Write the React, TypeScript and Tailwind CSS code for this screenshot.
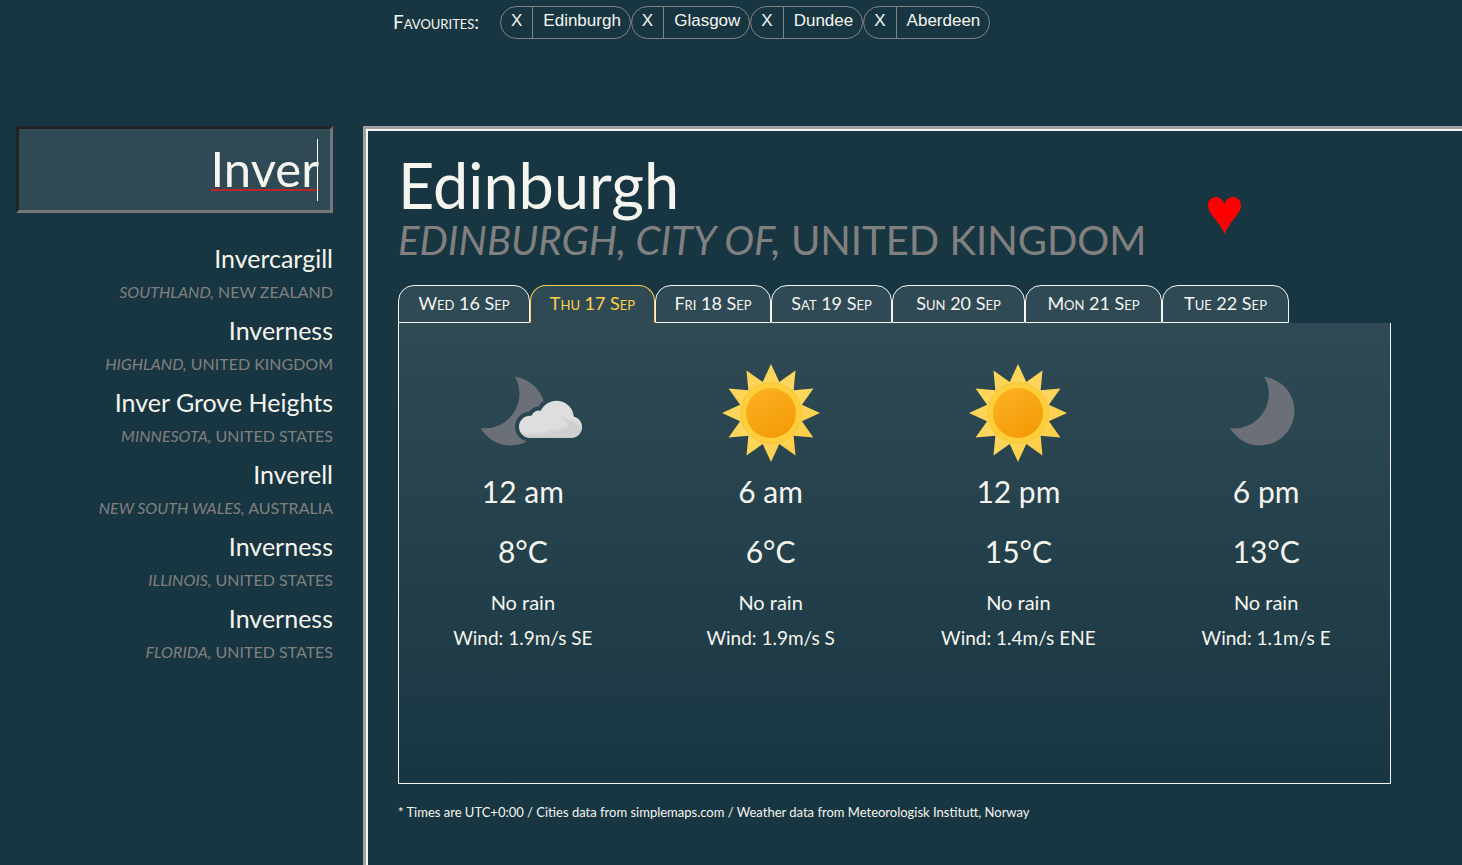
import { useState } from "react";

const favourites = ["Edinburgh", "Glasgow", "Dundee", "Aberdeen"];

const results = [
  { city: "Invercargill", region: "Southland", country: "New Zealand" },
  { city: "Inverness", region: "Highland", country: "United Kingdom" },
  { city: "Inver Grove Heights", region: "Minnesota", country: "United States" },
  { city: "Inverell", region: "New South Wales", country: "Australia" },
  { city: "Inverness", region: "Illinois", country: "United States" },
  { city: "Inverness", region: "Florida", country: "United States" },
];

const days = [
  { label: "Wed 16 Sep", width: "w-[132px]" },
  { label: "Thu 17 Sep", width: "w-[125px]" },
  { label: "Fri 18 Sep", width: "w-[116px]" },
  { label: "Sat 19 Sep", width: "w-[121px]" },
  { label: "Sun 20 Sep", width: "w-[133px]" },
  { label: "Mon 21 Sep", width: "w-[137px]" },
  { label: "Tue 22 Sep", width: "w-[127px]" },
];

const slots = [
  { icon: "cloudy-night", time: "12 am", temp: "8°C", rain: "No rain", wind: "Wind: 1.9m/s SE" },
  { icon: "sun", time: "6 am", temp: "6°C", rain: "No rain", wind: "Wind: 1.9m/s S" },
  { icon: "sun", time: "12 pm", temp: "15°C", rain: "No rain", wind: "Wind: 1.4m/s ENE" },
  { icon: "moon", time: "6 pm", temp: "13°C", rain: "No rain", wind: "Wind: 1.1m/s E" },
];

const starPoints = Array.from({ length: 24 }, (_, i) => {
  const radius = i % 2 === 0 ? 49 : 32;
  const angle = (i * Math.PI) / 12;
  return `${64 + radius * Math.sin(angle)},${64 - radius * Math.cos(angle)}`;
}).join(" ");

function Sun() {
  return (
    <svg viewBox="0 0 128 128" className="size-32" aria-hidden="true">
      <defs>
        <linearGradient id="rays" x1="0" y1="0" x2="1" y2="1">
          <stop offset="0" stopColor="#ffd352" />
          <stop offset="0.5" stopColor="#ffd75f" />
          <stop offset="1" stopColor="#fcc93a" />
        </linearGradient>
        <linearGradient id="core" x1="0.2" y1="0" x2="0.8" y2="1">
          <stop offset="0" stopColor="#fcb022" />
          <stop offset="1" stopColor="#f39a04" />
        </linearGradient>
      </defs>
      <polygon points={starPoints} fill="url(#rays)" />
      <circle cx="64" cy="64" r="31" fill="#f5c646" />
      <circle cx="64" cy="64" r="30" fill="#fece3b" />
      <circle cx="64" cy="64" r="25" fill="url(#core)" />
    </svg>
  );
}

const moonPath = "M62.3 27.7A34.5 34.5 0 1 1 28 79A34.5 34.5 0 0 0 62.3 27.7Z";
const cloudPath =
  "M71 88.7A11 11 0 0 1 71 66.7Q71.8 66.6 72.5 66.8A7.6 7.6 0 0 1 81.7 61.8A17.3 17.3 0 0 1 114.7 67.6A10.7 10.7 0 0 1 113.4 88.7Z";

function Moon() {
  return (
    <svg viewBox="0 0 128 128" className="size-32" aria-hidden="true">
      <path d={moonPath} fill="#6b6f78" />
    </svg>
  );
}

function CloudyNight() {
  return (
    <svg viewBox="0 0 128 128" className="size-32" aria-hidden="true">
      <defs>
        <mask id="cloud-gap">
          <rect width="128" height="128" fill="white" />
          <path d={cloudPath} fill="black" stroke="black" strokeWidth="8" />
        </mask>
        <clipPath id="cloud-shape">
          <path d={cloudPath} />
        </clipPath>
        <filter id="soft">
          <feGaussianBlur stdDeviation="1.3" />
        </filter>
      </defs>
      <g mask="url(#cloud-gap)">
        <path d={moonPath} fill="#6b6f78" transform="translate(-6.4 0)" />
      </g>
      <path d={cloudPath} fill="#dedede" />
      <g clipPath="url(#cloud-shape)">
        <path
          d="M58 82Q66 86 76 84Q85 85 92 81Q98 82 104 79Q110 79 110 75Q104 71 101 66Q108 71 115 72Q122 76 126 82V93H58Z"
          fill="#cfcfcf"
          filter="url(#soft)"
        />
      </g>
    </svg>
  );
}

function WeatherIcon({ name }: { name: string }) {
  if (name === "sun") return <Sun />;
  if (name === "moon") return <Moon />;
  return <CloudyNight />;
}

export default function App() {
  const [query, setQuery] = useState("Inver");
  const [activeDay, setActiveDay] = useState(1);

  return (
    <div className="flex min-h-screen flex-col overflow-x-hidden bg-[#183641] font-[Lato,sans-serif] text-[#f5f5f0]">
      <header className="flex h-[126px] items-start gap-5 pt-[6px] pl-[393px]">
        <h2 className="w-[87px] text-[19px] leading-8 whitespace-nowrap [font-variant:small-caps]">Favourites:</h2>
        <ul className="flex font-['Liberation_Sans',sans-serif] text-[17px]">
          {favourites.map((city) => (
            <li key={city} className="flex h-[33px] rounded-full border border-[#808488]">
              <button type="button" aria-label={`Remove ${city}`} className="border-r border-[#808488] px-[10px] pb-[3px]">
                X
              </button>
              <button type="button" className="pr-[9px] pb-[3px] pl-[10px]">
                {city}
              </button>
            </li>
          ))}
        </ul>
      </header>

      <div className="flex grow">
        <aside className="w-[363px] shrink-0 pr-[30px] pl-4 text-right">
          <div className="relative">
            <input
              type="text"
              aria-label="Search for a city"
              spellCheck={false}
              value={query}
              onChange={(event) => setQuery(event.target.value)}
              className="h-[87px] w-full border-3 border-t-[#222326] border-r-[#767676] border-b-[#767676] border-l-[#222326] bg-[#2f4a55] pr-[11px] pb-[3px] text-right text-[49px] underline decoration-[#b8252c] decoration-2 underline-offset-2 outline-none [text-decoration-skip-ink:none]"
            />
            <span className="absolute top-[13px] right-[15px] h-[62px] w-px bg-[#f5f5f0]" />
          </div>
          <ul className="pt-[25px]">
            {results.map((place, index) => (
              <li key={index} className="h-[72px]">
                <a href="#forecast" className="block">
                  <span className="block text-[25px] leading-10">{place.city}</span>
                  <span className="block text-base leading-7 text-[#808080] uppercase">
                    <em>{place.region},</em> {place.country}
                  </span>
                </a>
              </li>
            ))}
          </ul>
        </aside>

        <main className="min-w-0 grow border-t-5 border-r-0 border-b-0 border-l-5 border-[#f5f5f5] pt-6 pr-[71px] pl-[30px] [border-style:groove]">
          <div className="flex items-center">
            <div className="w-[810px]">
              <h1 className="text-[63px] leading-[60px]">Edinburgh</h1>
              <p className="text-[40px] leading-[50px] whitespace-nowrap text-[#808080] uppercase">
                <em>Edinburgh, City of,</em> United Kingdom
              </p>
            </div>
            <button type="button" aria-label="Remove from favourites" className="pt-3">
              <svg viewBox="0 0 33 38" className="h-[38px] w-[33px]" aria-hidden="true">
                <path
                  d="M16.5 37.5C14.8 32 11.5 28 7.5 22.5C3.5 17 0 13.5 0 8.5C0 3.5 3.5 0 8 0C12 0 15.2 2.6 16.5 7.5C17.8 2.6 21 0 25 0C29.5 0 33 3.5 33 8.5C33 13.5 29.5 17 25.5 22.5C21.5 28 18.2 32 16.5 37.5Z"
                  fill="#ff0000"
                />
              </svg>
            </button>
          </div>

          <div className="mt-5 flex" role="tablist">
            {days.map((day, index) => (
              <button
                key={day.label}
                type="button"
                role="tab"
                aria-selected={index === activeDay}
                onClick={() => setActiveDay(index)}
                className={`${day.width} h-[38px] rounded-t-2xl border bg-[#2f4a55] pb-[2px] text-lg whitespace-nowrap [font-variant:small-caps] ${
                  index === activeDay ? "border-[#ffd04b] border-b-transparent text-[#ffd04b]" : "border-[#f5f5f0]"
                }`}
              >
                {day.label}
              </button>
            ))}
          </div>

          <section
            id="forecast"
            className="grid h-[461px] grid-cols-4 border border-t-0 border-[#f5f5f0] bg-linear-to-b from-[#2f4a55] to-[#183641] pt-[26px] text-center"
          >
            {slots.map((slot) => (
              <article key={slot.time} className="flex flex-col items-center">
                <WeatherIcon name={slot.icon} />
                <h3 className="-mt-4 text-[30px] leading-[60px]">{slot.time}</h3>
                <p className="text-[30px] leading-[60px]">{slot.temp}</p>
                <p className="mt-1 text-xl leading-[35px]">{slot.rain}</p>
                <p className="text-[19px] leading-[35px]">{slot.wind}</p>
              </article>
            ))}
          </section>

          <footer className="pt-[18px] text-[13px] leading-5">
            * Times are UTC+0:00 / Cities data from simplemaps.com / Weather data from Meteorologisk Institutt, Norway
          </footer>
        </main>
      </div>
    </div>
  );
}
